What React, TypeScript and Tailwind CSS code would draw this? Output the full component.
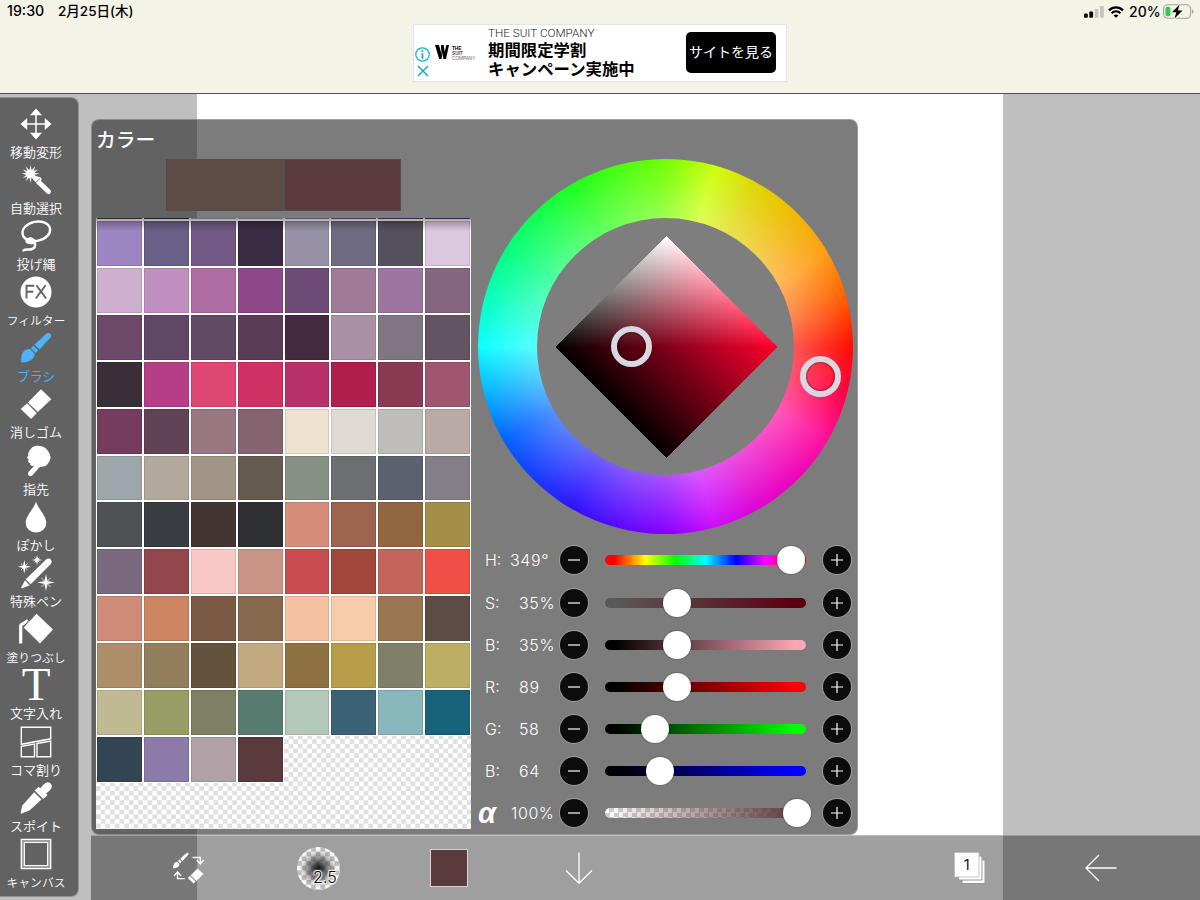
import React from 'react';

const jp = "font-['Noto_Sans_CJK_JP',sans-serif]";

const palette: string[] = [
  '#9c86c2', '#696087', '#725986', '#3a2c45', '#9791a7', '#6e6a81', '#55505e', '#dbc8df',
  '#cfafd0', '#c08fc0', '#ae6ea3', '#8e4788', '#6e4b77', '#9e7a96', '#9c76a0', '#866580',
  '#6d4969', '#614766', '#624a65', '#5c3b57', '#45293f', '#a990a4', '#7f7681', '#625461',
  '#3a2f38', '#b73e86', '#de4674', '#cf3164', '#b83068', '#b01e4c', '#8a3b53', '#a0566f',
  '#763c5d', '#614355', '#98777f', '#85646f', '#eee2cf', '#ded9d2', '#bebdb9', '#b9aaa6',
  '#9ca6ab', '#b3a89c', '#a19588', '#655b50', '#869083', '#6b6f72', '#5b616f', '#847e86',
  '#4e5253', '#393c41', '#433534', '#2e2f31', '#d58c79', '#9d6450', '#916640', '#a48e48',
  '#7b6a7f', '#92474d', '#f8c8c6', '#ca9486', '#c94d50', '#a1463a', '#c4655b', '#ef4f45',
  '#cf8b78', '#cd8460', '#7a5a45', '#86684f', '#f4c2a0', '#f7ccab', '#997651', '#5d4c45',
  '#ac8e68', '#927d5d', '#65523d', '#c2a97f', '#8d7141', '#b89e4b', '#80806a', '#bdae63',
  '#bfba92', '#979e65', '#7d8062', '#587b70', '#b3c7bb', '#3a6174', '#88b8bc', '#18627c',
  '#334454', '#8c7aa8', '#afa1a6', '#5a393f',
];
const sliver = ['#45424d', '#322c38', '#a8a2b0', '#a9a0b8', '#8f82ab', '#77587f', '#54437f', '#46307a'];

function Svg({ children }: { children: React.ReactNode }) {
  return (
    <svg viewBox="0 0 32 32" className="h-8 w-8 shrink-0 overflow-visible" fill="currentColor">
      {children}
    </svg>
  );
}

const tools: { name: string; small?: boolean; active?: boolean; icon: React.ReactNode }[] = [
  {
    name: '移動変形',
    icon: (
      <>
        <path d="M16 5v22M5 16h22" stroke="currentColor" strokeWidth="1.5" />
        <path d="M16 .5l6 6.700H10zM16 31.500l6-6.700H10zM.5 16l6.700-6v12zM31.500 16l-6.700-6v12z" />
      </>
    ),
  },
  {
    name: '自動選択',
    icon: (
      <>
        <path d="M10.5 1l1.100 5.200L15.400 2.300l-1.900 4.800 4.700-1.600-3.800 3.300 5 .9-5 1 3.700 3.300-4.700-1.500 1.800 4.800-3.700-3.800-1 5.500-1.100-5.500-3.700 3.800 1.800-4.800-4.700 1.500 3.700-3.300-5-1 5-.9L2.700 5.500l4.800 1.600-1.900-4.800 3.800 3.900z" />
        <path d="M15.700 14.600l3.300.8M17.500 17l11 10.500" stroke="currentColor" strokeWidth="5" strokeLinecap="round" />
        <path d="M14.500 19.500l5.500-5" stroke="#636363" strokeWidth=".9" />
      </>
    ),
  },
  {
    name: '投げ縄',
    icon: (
      <>
        <ellipse cx="16.300" cy="11.300" rx="14" ry="9.600" transform="rotate(-12 16.300 11.300)" fill="none" stroke="currentColor" strokeWidth="2.400" />
        <path d="M5.500 20c2-3.500 6-3.500 8.700-1 2.800 2 2 5-.8 5.200-2 .3-6 0-8-2z" />
        <path d="M14.500 21.500c2 3.500.5 7.500-4.500 8-3 .2-5-.3-6.500.9" fill="none" stroke="currentColor" strokeWidth="2.400" strokeLinecap="round" />
      </>
    ),
  },
  {
    name: 'フィルター',
    small: true,
    icon: (
      <>
        <circle cx="16" cy="16" r="15.500" />
        <path d="M6.500 22.500V9.700h7.700M6.500 15.700h6.700M15.800 22.500L25.600 9.300M16.400 9.300l9.700 13.200" fill="none" stroke="#636363" strokeWidth="1.900" />
      </>
    ),
  },
  {
    name: 'ブラシ',
    active: true,
    icon: (
      <path d="M26.200 1.700c3.200-2.200 6.200.8 4.400 3.700L19.400 17.600l-5-4.800zM13.400 13.800l4.900 4.800-2.600 2.400-4.800-4.800zM10 17l4.800 4.800c-.2 5.700-6.700 9.200-13.700 8.600C1.600 28 .8 26.500 1.600 23.500 2.700 18.800 6.200 16.700 10 17z" />
    ),
  },
  {
    name: '消しゴム',
    icon: <path d="M21 1.300L31.300 11.300 17.800 24 7.900 14.400zM7 15.300l9.800 9.600-5.600 6L.7 21z" />,
  },
  {
    name: '指先',
    icon: (
      <path d="M12 2.500c3.500-2.700 9.500-2.200 12.500 0 3 1.700 5.700 6.200 6 9.500.2 3.200-2.300 6.500-4.200 8.500-2 1.800-5 .4-7 2l-6.800 7.700c-2.800 2.600-5.700-.6-4-3.200l5.700-6.200c-2.400.5-4.500-.3-4-2.600-2-.3-2.600-2-1.600-3.700-2-1.200-1.600-3-.1-4.300C7.200 8 10 5 12 2.500z" />
    ),
  },
  {
    name: 'ぽかし',
    icon: <path d="M16 .5c1.500 6.500 10.300 14 10.300 21.500A10.300 9.500 0 0 1 5.700 22C5.700 14.500 14.500 7 16 .5z" />,
  },
  {
    name: '特殊ペン',
    icon: (
      <>
        <path d="M26.300 2.200c3.200-2.200 6.900 1.400 4.700 4.600L10.700 27.300 5.800 22.300zM5 23.300l4.700 4.900-7.400 3.100c-.8.200-1.200-.4-1-1z" />
        <path d="M4.300 3l1.100 5.400L10.800 9.700l-5.400 1.200L4.300 16.500l-1.200-5.600-5.300-1.200 5.300-1.300zM17 -2l1 4 4 1-4 1-1 4-1.100-4-4-1 4-1zM26 17l1.500 7 7.300 1.500-7.300 1.600L26 34l-1.500-6.900-7.300-1.600 7.300-1.500z" />
        <path d="M1 6.500l6.600 6.500M7.600 6.500L1 13M14.500.7l5 4.700M19.500.7l-5 4.700M21.500 21l9 9M30.500 21l-9 9" stroke="currentColor" strokeWidth=".8" />
      </>
    ),
  },
  {
    name: '塗りつぶし',
    small: true,
    icon: (
      <>
        <path d="M16.500.8L33 16.500 20 30.500 3.700 14.500z" />
        <path d="M8 7.500L.7 12.200M.7 11.500V30.500" fill="none" stroke="currentColor" strokeWidth="3.200" />
        <path d="M8.500 7.500l-5 6.800" fill="none" stroke="#636363" strokeWidth=".8" />
      </>
    ),
  },
  { name: '文字入れ', icon: null },
  {
    name: 'コマ割り',
    icon: (
      <path d="M1.300 1.300h29.400v11.500L1.300 18.300zM1.300 30.700v-10.400L14.500 18v12.700zM17 17.500l13.700-2.400v15.600H17z" fill="none" stroke="currentColor" strokeWidth="1.400" />
    ),
  },
  {
    name: 'スポイト',
    icon: (
      <path d="M22.500 3.700c3-3.600 5.600-4.500 8-2.300 2.300 2.200 1.600 5.200-2 8L26 11.500l1.500 1.800-4.300 3.800-8.600-8.600L18.500 4.700l1.800 1.500zM14.200 10.200l7.300 7.300L10 28c-2.500 2-4.500 1.300-7.700 3.500-1 .5-2-.5-1.700-1.500 1.500-3.700.6-5.700 3-8z" />
    ),
  },
  {
    name: 'キャンバス',
    small: true,
    icon: (
      <>
        <path d="M2.700 2.700h26.600v26.600H2.700z" fill="none" stroke="#a0a0a0" strokeWidth="1.600" />
        <path d="M1.300 1.300h29.400v29.400H1.300z" fill="none" stroke="currentColor" strokeWidth="1.300" />
        <path d="M4.300 4.300h23.400v23.400H4.300z" fill="none" stroke="currentColor" strokeWidth="1.300" />
      </>
    ),
  },
];

function Toolbar() {
  return (
    <aside className="mt-[3px] h-[800px] w-[79px] shrink-0 rounded-r-lg border-y border-r border-white/30 bg-[#242424]/60 pt-[9.500px] text-white">
      {tools.map((t) => (
        <div key={t.name} className={`flex h-[56.200px] w-[72px] flex-col items-center ${t.active ? 'text-[#4cb2fa]' : ''}`}>
          {t.icon ? (
            <Svg>{t.icon}</Svg>
          ) : (
            <div className="flex h-8 items-center font-['Liberation_Serif',serif] text-[47px] leading-none">
              <span className="-translate-y-px">T</span>
            </div>
          )}
          <span className={`${jp} mt-[4px] whitespace-nowrap font-[350] leading-[16px] ${t.small ? 'text-[11.800px]' : 'text-[13px]'}`}>
            {t.name}
          </span>
        </div>
      ))}
    </aside>
  );
}

const checker = 'bg-[repeating-conic-gradient(#e0e0e0_0_25%,#fff_0_50%)] bg-[length:9.400px_9.400px]';

function Palette() {
  return (
    <div className={`relative h-[611px] w-[375px] overflow-hidden ${checker}`}>
      <div className="grid h-[2.200px] grid-cols-8">
        {sliver.map((c) => (
          <div key={c} className="bg-white px-px pb-px">
            <div className="h-full" style={{ backgroundColor: c }} />
          </div>
        ))}
      </div>
      <div className="grid grid-cols-8">
        {palette.map((c, i) => (
          <div key={i} className="h-[46.875px] bg-white p-px">
            <div className="h-full border border-black/10" style={{ backgroundColor: c }} />
          </div>
        ))}
      </div>
      <div className="absolute inset-x-0 top-0 h-[13px] bg-linear-to-b from-black/35 to-transparent" />
    </div>
  );
}

function Ring({ className }: { className: string }) {
  return (
    <div className={`absolute h-[41px] w-[41px] rounded-full border-[6.500px] border-[#d8d8e0] ${className}`}>
      <div className="h-full w-full rounded-full shadow-[inset_0_0_2px_1px_rgba(0,0,0,0.35)]" />
    </div>
  );
}

function Wheel() {
  return (
    <div className="relative flex h-[375px] w-[375px] items-center justify-center rounded-full bg-[radial-gradient(closest-side,rgba(255,255,255,0.32)_68%,rgba(255,255,255,0)_100%),conic-gradient(from_90deg,#ff0a00_0deg,#ff0040_15deg,#ff0d9c_30deg,#f000b8_45deg,#e000d2_60deg,#cc0cff_75deg,#8400ff_90deg,#2b10ff_120deg,#0060ff_150deg,#0affff_180deg,#00ff80_210deg,#1cff1c_240deg,#70ff00_270deg,#ccff0c_285deg,#dfd400_300deg,#efb800_315deg,#ff9c14_330deg,#ff5c00_345deg,#ff0a00_360deg)]">
      <div className="flex h-[257px] w-[257px] items-center justify-center rounded-full bg-[#7e7e7e]">
        <svg viewBox="0 0 222 222" className="isolate h-[222px] w-[222px]" shapeRendering="crispEdges">
          <defs>
            <linearGradient id="lower" gradientUnits="userSpaceOnUse" x1="55.500" y1="166.500" x2="166.500" y2="55.500">
              <stop offset="0" stopColor="#000" />
              <stop offset="1" stopColor="#ff002f" />
            </linearGradient>
            <linearGradient id="upper" gradientUnits="userSpaceOnUse" x1="55.500" y1="55.500" x2="166.500" y2="166.500">
              <stop offset="0" stopColor="#000" />
              <stop offset="1" stopColor="#ff002f" />
            </linearGradient>
            <linearGradient id="light" gradientUnits="userSpaceOnUse" x1="0" y1="0" x2="0" y2="111">
              <stop offset="0" stopColor="#fff" />
              <stop offset="1" stopColor="#000" />
            </linearGradient>
          </defs>
          <path d="M0 111H222L111 222z" fill="url(#lower)" />
          <path d="M0 111L111 0L222 111z" fill="url(#upper)" />
          <path d="M0 111L111 0L222 111z" fill="url(#light)" className="mix-blend-plus-lighter" />
        </svg>
      </div>
      <Ring className="left-[133px] top-[167px]" />
      <Ring className="left-[322px] top-[197px]" />
    </div>
  );
}

const sliders = [
  { label: 'H:', value: '349°', pad: 'pl-[25px]', pos: 186, track: 'bg-[linear-gradient(to_right,#f00_5%,#ff0_20%,#0f0_35%,#0ff_50%,#00f_65%,#f0f_80%,#f00_97%)]' },
  { label: 'S:', value: '35%', pad: 'pl-[34px]', pos: 72, track: 'bg-[linear-gradient(to_right,#595959_5%,#590010_95%)]' },
  { label: 'B:', value: '35%', pad: 'pl-[34px]', pos: 72, track: 'bg-[linear-gradient(to_right,#000_5%,#ffa6b6_95%)]' },
  { label: 'R:', value: '89', pad: 'pl-[34px]', pos: 72, track: 'bg-[linear-gradient(to_right,#000_5%,#f00_95%)]' },
  { label: 'G:', value: '58', pad: 'pl-[34px]', pos: 50, track: 'bg-[linear-gradient(to_right,#000_5%,#0f0_95%)]' },
  { label: 'B:', value: '64', pad: 'pl-[34px]', pos: 54.7, track: 'bg-[linear-gradient(to_right,#000_5%,#00f_95%)]' },
  {
    label: 'α', value: '100%', pad: 'pl-[26px]', pos: 192,
    track: 'bg-[linear-gradient(to_right,rgba(90,57,63,0)_2%,#5a393f_96%),repeating-conic-gradient(#d0d0d0_0_25%,#fff_0_50%)] bg-[length:100%_100%,9px_9px]',
  },
];

function RoundButton({ plus }: { plus?: boolean }) {
  return (
    <button className="flex h-7 w-7 shrink-0 items-center justify-center rounded-full bg-[#0c0c0c] shadow-[0_0_0_1px_rgba(255,255,255,0.25)]">
      <svg viewBox="0 0 12 12" className="h-3 w-3" stroke="#fff" strokeWidth="1.200">
        <path d={plus ? 'M0 6h12M6 0v12' : 'M0 6h12'} />
      </svg>
    </button>
  );
}

function Sliders() {
  return (
    <div className="w-[371px]">
      {sliders.map((s, i) => (
        <div key={i} className="flex h-[42.170px] items-center font-['Inter',sans-serif] text-[16px] font-light tracking-[0.6px] text-white">
          {s.label === 'α' ? (
            <span className="w-0 font-['Liberation_Sans',sans-serif] text-[29px] font-bold italic leading-none">
              <span className="-ml-[7px]">α</span>
            </span>
          ) : (
            <span className="w-0 tracking-normal">{s.label}</span>
          )}
          <span className={`w-[75px] shrink-0 whitespace-nowrap ${s.pad}`}>{s.value}</span>
          <RoundButton />
          <div className={`relative ml-[17px] mr-[16.500px] h-[10px] w-[201px] shrink-0 rounded-full ${s.track}`}>
            <div className="absolute -top-[9px] h-7 w-7 -translate-x-1/2 rounded-full bg-white shadow-[0_0_1px_1px_rgba(0,0,0,0.15)]" style={{ left: s.pos }} />
          </div>
          <RoundButton plus />
        </div>
      ))}
    </div>
  );
}

function ColorPanel() {
  return (
    <section className="mt-[25px] flex h-[716px] w-[767px] rounded-lg border border-white/25 bg-[#242424]/60 pl-1">
      <div className="w-[375px] shrink-0">
        <h2 className={`${jp} h-[39px] pt-[5px] text-[19.800px] font-medium leading-[28px] text-white`}>カラー</h2>
        <div className="ml-[70px] flex h-[52px] w-[235px] gap-[2px] bg-[#505050] p-px">
          <div className="flex-1 bg-[#5d4c45]" />
          <div className="flex-1 bg-[#5a393f]" />
        </div>
        <div className="h-[7px]" />
        <Palette />
      </div>
      <div className="ml-[7px] pt-[39px]">
        <Wheel />
        <div className="ml-[7px] mt-[5.300px]">
          <Sliders />
        </div>
      </div>
    </section>
  );
}

function BottomBar() {
  return (
    <nav className="h-[65px] shrink-0 border-t border-white/30 bg-black/[0.375] pl-[32px] text-white">
      <div className="grid h-full w-[1043px] grid-cols-8 items-center justify-items-center pb-[1px] pt-px">
        <svg viewBox="0 0 32 32" className="h-8 w-8" fill="currentColor">
          <path d="M14.500 1c1.300-.9 2.700.5 1.800 1.700L10.500 9 8.200 6.800zM7.500 7.500l2.200 2.200-1.600 1.500L6 9zM5.300 9.700l2.200 2.200c0 2.400-2.700 4.600-6.300 4.300-.3-1.100 0-1.800.3-3.100.5-2 2.100-3.500 3.800-3.400zM25.500 16.500l6 5.500-7.200 7-5.800-5.600zM17.800 24l5.800 5.600-2.100 2-5.700-5.500z" />
          <path d="M20.500 5.500h7.800V11M24.700 8l3.600 4 3.400-4M12.700 26.700H5.500V21M2 24l3.500-4 3.600 4" fill="none" stroke="currentColor" strokeWidth="1.300" />
        </svg>
        <div className="relative h-[43px] w-[43px] rounded-full bg-[radial-gradient(closest-side,#111_0%,rgba(60,60,60,0.75)_35%,rgba(160,160,160,0.2)_80%,rgba(255,255,255,0.1)_100%),repeating-conic-gradient(#bbb_0_25%,#fff_0_50%)] bg-[length:100%_100%,9.400px_9.400px]">
          <span className="absolute left-[16px] top-[20px] font-['Inter',sans-serif] text-[16px] font-light leading-5 text-black [text-shadow:0_0_1px_white,1px_1px_1px_white,-1px_-1px_1px_white,1px_-1px_1px_white,-1px_1px_1px_white]">
            2.5
          </span>
        </div>
        <div className="h-[38px] w-[38px] border border-[#d8d0d2] bg-[#5a393f]" />
        <svg viewBox="0 0 28 32" className="h-8 w-7" fill="none" stroke="#fff" strokeWidth="1.300">
          <path d="M14 .5v30M1 18.500l13 12.700 13-12.700" />
        </svg>
        <div className="col-start-7 h-8 w-8">
          <svg viewBox="0 0 32 32" className="h-8 w-8">
            <path d="M8 8h23v23.500H8z" fill="#fff" stroke="#999" strokeWidth="1" />
            <path d="M4.500 4h23.500v24H4.500z" fill="#fff" stroke="#999" strokeWidth="1" />
            <path d="M.5.500h24.500v24.500H.5z" fill="#fff" stroke="#bbb" strokeWidth=".8" />
            <text x="12.600" y="18" textAnchor="middle" fontSize="14.500" fontFamily="Inter, sans-serif" fill="#111">1</text>
          </svg>
        </div>
        <svg viewBox="0 0 32 28" className="h-7 w-8" fill="none" stroke="#fff" strokeWidth="1.300">
          <path d="M31.500 14H1M14 1L1 14l13 13" />
        </svg>
      </div>
    </nav>
  );
}

function StatusBar() {
  return (
    <div className="flex h-6 items-center justify-between pl-[7px] pr-[6px] font-['Inter','Noto_Sans_CJK_JP',sans-serif] text-[13.500px] font-medium text-black">
      <div className="flex h-[22px] items-center self-start">
        <span className="w-[51px] text-[14.200px]">19:30</span>
        <span className="whitespace-nowrap">2月25日(木)</span>
      </div>
      <div className="flex h-[23px] items-center self-start">
        <svg viewBox="0 0 20 12" className="h-3 w-5">
          <rect x="0" y="7.500" width="3.800" height="4.300" rx="1" />
          <rect x="5.300" y="5.500" width="3.800" height="6.300" rx="1" />
          <rect x="10.700" y="3" width="3.800" height="8.800" rx="1" fill="#c6c5bb" />
          <rect x="16" y="0" width="3.800" height="11.800" rx="1" fill="#c6c5bb" />
        </svg>
        <svg viewBox="0 0 16 12" className="ml-[4px] h-3 w-4" fill="none" stroke="#000" strokeWidth="2.200">
          <path d="M1 4.400c4-4 10-4 14 0M3.500 7.200c2.600-2.500 6.400-2.500 9 0" />
          <path d="M8 11.800L5.500 9.400c1.400-1.300 3.600-1.300 5 0z" fill="#000" stroke="none" />
        </svg>
        <span className="ml-[5px] w-[34px] text-[14px]">20%</span>
        <svg viewBox="0 0 31 15" className="h-[15px] w-[31px]">
          <rect x=".6" y=".8" width="27" height="13.400" rx="4" fill="none" stroke="#a3a39c" strokeWidth="1.100" />
          <rect x="2.400" y="2.700" width="5" height="9.600" rx="2" fill="#33c759" />
          <path d="M29 5.200c2 .8 2 3.800 0 4.600z" fill="#a3a39c" />
          <path d="M16.500.5L9 8.300h4.300L11.500 14.500 19.500 6.600h-4.600z" fill="#000" stroke="#f4f3e7" strokeWidth="1.400" paintOrder="stroke" />
        </svg>
      </div>
    </div>
  );
}

function Banner() {
  return (
    <div className="mx-auto flex h-[58px] w-[374px] border border-[#e4e4e2] bg-white text-black">
      <div className="flex w-[17px] flex-col items-center gap-[3px] pt-[22px]">
        <svg viewBox="0 0 15 15" className="h-[15px] w-[15px]" fill="none" stroke="#12acd0">
          <circle cx="7.500" cy="7.500" r="6.700" strokeWidth="1.200" />
          <path d="M7.500 6.200v5.500M7.500 3.300v1.700" strokeWidth="1.800" />
        </svg>
        <svg viewBox="0 0 12 12" className="h-3 w-3" fill="none" stroke="#12acd0" strokeWidth="1.500">
          <path d="M1 1l10 10M11 1L1 11" />
        </svg>
      </div>
      <div className="flex w-[57px] items-start gap-[3px] pl-[4px] pt-[20px]">
        <svg viewBox="0 0 14 14" className="h-[14px] w-[14px]">
          <path d="M0 0h4l2 7V0h2.700l1 7L11.300 0H14l-3 14H8.300L7.500 8.500 6.500 14H4.200z" />
          <path d="M4.700 0l2.600 10" stroke="#fff" strokeWidth=".5" />
        </svg>
        <div className="w-[24px] pt-px font-['Liberation_Sans',sans-serif] text-[4.700px] leading-[5px]">
          <div className="font-bold">THE</div>
          <div className="font-bold text-[#444]">SUIT</div>
          <div className="text-[#666]">COMPANY</div>
        </div>
      </div>
      <div className="w-[198px]">
        <div className="pt-[1px] font-['Roboto',sans-serif] text-[11.700px] font-light leading-[14px] text-[#222]">THE SUIT COMPANY</div>
        <div className={`${jp} whitespace-nowrap text-[16.400px] font-bold leading-[19px]`}>
          期間限定学割
          <br />
          キャンペーン実施中
        </div>
      </div>
      <button className={`${jp} mt-[7px] h-[41px] w-[90px] whitespace-nowrap rounded-[5px] bg-black pb-[2px] text-[14px] text-white`}>サイトを見る</button>
    </div>
  );
}

export default function App() {
  return (
    <div className="flex h-[900px] w-[1200px] flex-col overflow-hidden">
      <header className="h-[94px] shrink-0 border-b-[1.500px] border-[#4c4c4a] bg-[#f4f3e7] shadow-[0_1px_0_#8f8f8f]">
        <StatusBar />
        <Banner />
      </header>
      <main className="flex h-[806px] bg-[linear-gradient(to_right,#bfbfbf_197px,#fff_197px,#fff_1003px,#bfbfbf_1003px)]">
        <Toolbar />
        <div className="ml-3 flex flex-1 flex-col">
          <ColorPanel />
          <BottomBar />
        </div>
      </main>
    </div>
  );
}
